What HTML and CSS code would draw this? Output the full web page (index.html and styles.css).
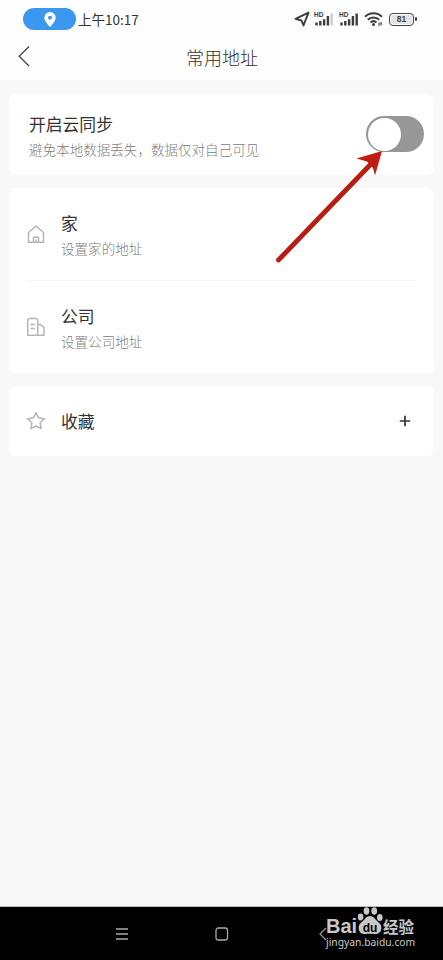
FILE: index.html
```html
<!DOCTYPE html>
<html lang="zh-CN">
<head>
  <meta charset="UTF-8" />
  <meta name="viewport" content="width=device-width, initial-scale=1" />
  <title>常用地址</title>
  <link rel="stylesheet" href="styles.css">
</head>
<body>
  <header class="top">
    <div class="status-bar">
      <span class="location-pill">
        <svg width="12" height="15" viewBox="0 0 12 15"><path fill="#fff" fill-rule="evenodd" d="M6 0a5.7 5.7 0 0 0-5.7 5.7C.3 9.500 6 15 6 15s5.700-5.500 5.700-9.300A5.700 5.700 0 0 0 6 0zm0 3.700a2 2 0 1 1 0 4 2 2 0 0 1 0-4z"/></svg>
      </span>
      <span class="time">上午10:17</span>
      <div class="status-icons">
        <svg class="plane" width="16" height="16" viewBox="0 0 16 16"><path d="M1.500 7.800 14.500 1.600 9.500 14.400 7.500 9.500z" fill="none" stroke="#3c3c3c" stroke-width="1.900" stroke-linejoin="round"/></svg>
        <svg class="signal" width="22" height="16" viewBox="0 0 22 16">
          <text x="0" y="6" class="hd">HD</text>
          <path d="M2.500 14.500v-3M6.300 14.500v-4.500M10.100 14.500v-6.300M13.900 14.500v-9.500" class="bars"/>
          <path d="M17.700 14.500v-12" class="bars weak"/>
        </svg>
        <svg class="signal" width="22" height="16" viewBox="0 0 22 16">
          <text x="0" y="6" class="hd">HD</text>
          <path d="M2.500 14.500v-3M6.300 14.500v-4.500M10.100 14.500v-6.300M13.900 14.500v-9.500M17.700 14.500v-12" class="bars"/>
        </svg>
        <svg class="wifi" width="20" height="16" viewBox="0 0 20 16">
          <path d="M1 5.800a12 12 0 0 1 17 0M3.800 8.800a8 8 0 0 1 11.400 0M6.500 11.500a4.500 4.500 0 0 1 6 0" fill="none" stroke="#3c3c3c" stroke-width="2"/>
          <circle cx="9.500" cy="13.500" r="1.500" fill="#3c3c3c"/>
          <path d="M14 12.300h4l-1.500-1.300M18.300 13.800h-4l1.500 1.300" fill="none" stroke="#3c3c3c" stroke-width=".8"/>
        </svg>
        <span class="battery">81</span>
      </div>
    </div>
    <div class="title-bar">
      <svg class="back" width="12" height="22" viewBox="0 0 12 22"><path d="M11 .5 1.200 10.300 11 20" fill="none" stroke="#444" stroke-width="1.300"/></svg>
      <h1>常用地址</h1>
    </div>
  </header>

  <main>
    <section class="card sync">
      <div>
        <h2>开启云同步</h2>
        <p>避免本地数据丢失，数据仅对自己可见</p>
      </div>
      <span class="switch"></span>
      <svg class="arrow" width="110" height="116" viewBox="0 0 110 116">
        <path d="M4.500 110 97 14" stroke="#b91d12" stroke-width="4.800" stroke-linecap="round"/>
        <path d="M108 1 82.500 8.500 93 11.500 99 18 101 25.500z" fill="#c01c10"/>
      </svg>
    </section>

    <section class="card">
      <div class="row">
        <svg class="icon" width="20" height="20" viewBox="0 0 20 20"><path d="M2.500 8.500 10 2l7.500 6.500v9.700h-15zM7.500 18v-4.700h5V18M10 15.500V18" /></svg>
        <div>
          <h2>家</h2>
          <p>设置家的地址</p>
        </div>
      </div>
      <div class="divider"></div>
      <div class="row">
        <svg class="icon" width="20" height="20" viewBox="0 0 20 20"><path d="M1.700 18.200V2.800l1.500-1.300h7l1.500 1.300v15.400zM11.700 7.500h2.800l3.500 2.800v7.900h-6.300M4.500 7.500h4.300M4.500 11.500h4.300"/></svg>
        <div>
          <h2>公司</h2>
          <p>设置公司地址</p>
        </div>
      </div>
    </section>

    <section class="card row favorite">
      <svg class="icon" width="20" height="20" viewBox="0 0 20 20"><path d="m10 1.800 2.600 5 5.700.9-4.100 4.100.9 5.800-5.100-2.600-5.100 2.600.9-5.800-4.100-4.100 5.700-.9z"/></svg>
      <h2>收藏</h2>
      <svg class="plus" width="12" height="12" viewBox="0 0 12 12"><path d="M6 .8v10.400M.8 6h10.400" stroke="#333" stroke-width="1.700"/></svg>
    </section>
  </main>

  <footer class="nav-bar">
    <svg class="menu" width="12" height="12" viewBox="0 0 12 12"><path d="M0 1h12M0 6h12M0 11h12" stroke="#aaa" stroke-width="1.300"/></svg>
    <svg class="home" width="14" height="14" viewBox="0 0 14 14"><rect x="1" y="1" width="11.500" height="12" rx="2.300" fill="none" stroke="#aaa" stroke-width="1.300"/></svg>
    <svg class="nav-back" width="8" height="14" viewBox="0 0 8 14"><path d="M7 1 1 7l6 6" fill="none" stroke="#999" stroke-width="1.200"/></svg>
    <div class="watermark">
      <div class="brand">
        <span class="bai">Bai</span>
        <svg width="26" height="28" viewBox="0 0 26 28">
          <g fill="#c8c8c8">
            <ellipse cx="3.600" cy="10" rx="2.800" ry="3.400"/>
            <ellipse cx="9.500" cy="4" rx="2.900" ry="3.700"/>
            <ellipse cx="17.200" cy="4" rx="2.900" ry="3.700"/>
            <ellipse cx="22.800" cy="10.500" rx="2.800" ry="3.500"/>
            <path d="M13 9c-3.500 0-4.800 3-7.300 5.200-3 2.500-4.500 4.300-4 7.800.5 3.800 3.500 5.500 6.800 5 3-.4 6-.4 9 0s6.300-1.200 6.800-5c.5-3.500-1-5.300-4-7.800C17.800 12 16.500 9 13 9z"/>
          </g>
          <text x="13" y="24.500" text-anchor="middle" class="du">du</text>
        </svg>
        <span class="jingyan">经验</span>
      </div>
      <div class="url">jingyan.baidu.com</div>
    </div>
  </footer>
</body>
</html>
```
FILE: styles.css
```css
* { box-sizing: border-box; }
body { margin: 0; height: 960px; display: flex; flex-direction: column; background: #f8f8f8; font-family: "Noto Sans CJK SC", sans-serif; overflow: hidden; }
h1, h2, p { margin: 0; font-weight: 400; }
svg { display: block; flex: none; }

.top { height: 80px; background: #fefefe; }
.status-bar { display: flex; align-items: center; height: 38px; padding-left: 23px; }
.location-pill { display: flex; align-items: center; justify-content: center; width: 53px; height: 22px; border-radius: 11px; background: #3b98ee; }
.time { margin-left: 2px; font-size: 13.5px; line-height: 20px; color: #333; white-space: nowrap; }
.status-icons { display: flex; align-items: center; margin-left: auto; padding-right: 29px; }
.signal { margin-left: 3px; }
.plane + .signal { margin-left: 4px; }
.hd { font: bold 6.5px "Liberation Sans", sans-serif; fill: #3c3c3c; }
.bars { stroke: #3c3c3c; stroke-width: 2.4; }
.weak { stroke: #ccc; }
.wifi { margin-left: 3px; }
.battery { position: relative; width: 25px; height: 13px; margin-left: 5px; border: 1.5px solid #444; border-radius: 4px; background: #e4e4e4; box-shadow: inset 0 0 0 1px #fff; font: bold 8.5px/11px "Liberation Sans", sans-serif; text-align: center; color: #444; }
.battery::after { content: ""; position: absolute; right: -4px; top: 3px; width: 2px; height: 4px; border-radius: 1px; background: #444; }

.title-bar { display: flex; align-items: center; height: 38px; padding: 0 18px; }
.title-bar h1 { flex: 1; padding-right: 11px; font-size: 18px; line-height: 26px; font-weight: 300; color: #333; text-align: center; }

main { flex: 1; padding: 14px 9px 0; }
.card { margin-bottom: 13px; border-radius: 7px; background: #fff; }
.card h2 { font-size: 16.8px; line-height: 24px; color: #333; }
.card p { margin-top: 3px; font-size: 13.55px; line-height: 20px; font-weight: 300; color: #808080; }
.sync { position: relative; display: flex; align-items: flex-start; justify-content: space-between; height: 81px; padding: 18px 10px 0 20px; }
.switch { width: 58px; height: 36px; margin-top: 4px; padding: 1.5px; border-radius: 18px; background: #979797; }
.switch::before { content: ""; display: block; width: 33px; height: 33px; border-radius: 50%; background: #fff; }
.arrow { position: absolute; left: 265px; top: 56px; z-index: 1; }
.row { display: flex; align-items: center; height: 92px; padding: 0 22px 0 17px; }
.row > div { margin-left: 15px; }
.row > h2 { margin-left: 15px; }
.icon { fill: none; stroke: #b5b5b5; stroke-width: 1.5; stroke-linejoin: round; }
.divider { height: 1px; margin: 0 17px 0 21px; background: #f4f4f4; }
.favorite { height: 70px; }
.plus { margin-left: auto; margin-right: 1px; }

.nav-bar { position: relative; display: flex; align-items: center; height: 53px; padding-left: 116px; background: #000; box-shadow: 0 -1px #bbb; }
.home { margin-left: 87px; }
.nav-back { margin-left: 90px; }
.watermark { position: absolute; left: 326px; top: 0; color: #c8c8c8; }
.brand { display: flex; align-items: flex-end; height: 28px; }
.bai { width: 31px; font: bold 20px/18px "Liberation Sans", sans-serif; }
.du { font: bold 12px "Liberation Sans", sans-serif; fill: #000; }
.jingyan { font-size: 15.5px; line-height: 18px; font-weight: 700; white-space: nowrap; }
.url { font: 10.3px/15px "Noto Sans", sans-serif; }
```
